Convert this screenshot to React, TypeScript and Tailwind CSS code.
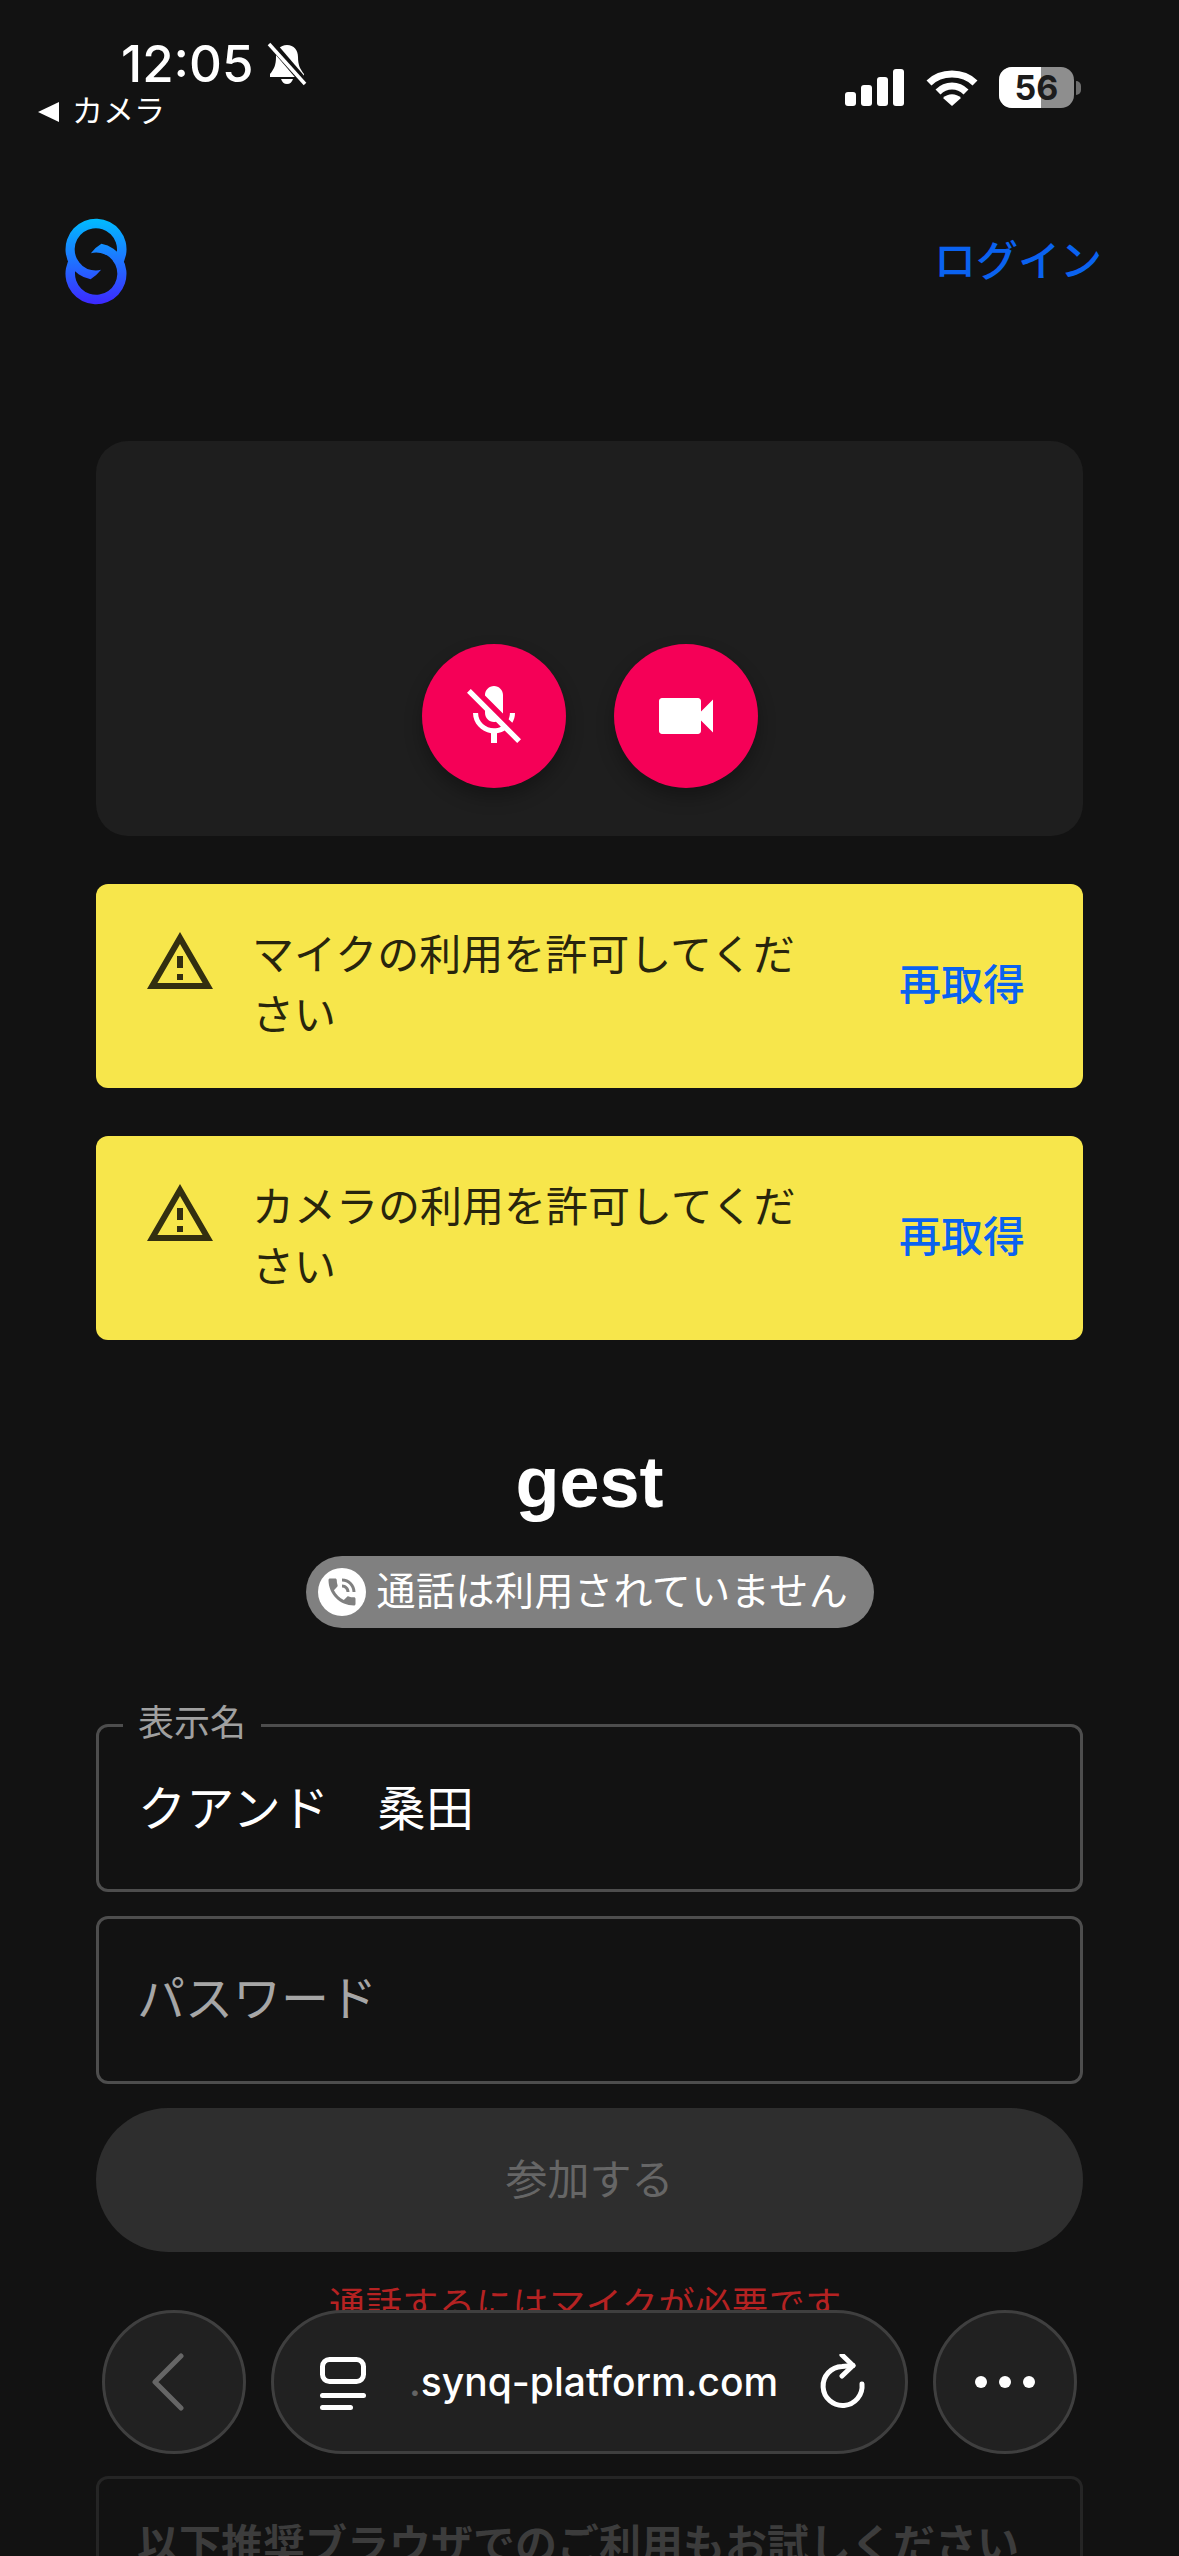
import React from "react";

const JP = "font-['Liberation_Sans','Noto_Sans_CJK_JP',sans-serif]";

function Logo() {
  return (
    <svg width="62" height="87" viewBox="0 0 63 87" fill="none">
      <defs>
        <linearGradient id="lg" gradientUnits="userSpaceOnUse" x1="0" y1="0" x2="0" y2="87">
          <stop offset="0" stopColor="#00bcff" />
          <stop offset="1" stopColor="#3d28ff" />
        </linearGradient>
      </defs>
      <path d="M36.7 52Q32 58 26 61.5A31 31 0 1 1 56.9 48.8L49.1 43.3A21.5 21.5 0 1 0 36.7 52Z" fill="url(#lg)" />
      <path d="M26.3 35Q31 29 37 25.5A31 31 0 1 1 6.1 38.2L13.9 43.7A21.5 21.5 0 1 0 26.3 35Z" fill="url(#lg)" />
    </svg>
  );
}

function Warn() {
  return (
    <svg width="72" height="72" viewBox="0 0 24 24" fill="#332f10" className="shrink-0">
      <path d="M12 5.99 19.53 19H4.47zM12 2 1 21h22zm1 14h-2v2h2zm0-6h-2v4h2z" />
    </svg>
  );
}

function Alert({ text }: { text: string }) {
  return (
    <div className="flex items-start h-[204px] rounded-[12px] bg-[#f7e64b] pl-[48px] pr-[58px] pt-[42px]">
      <Warn />
      <div className="flex-1 ml-[36px] mr-[70px] text-[42px] leading-[60px] text-[#28250d]">{text}</div>
      <div className="text-[42px] leading-[60px] text-[#0a62f0] mt-[30px] font-medium">再取得</div>
    </div>
  );
}

export default function App() {
  return (
    <div className={`relative w-[1179px] h-[2556px] overflow-hidden bg-[#121212] ${JP}`}>
      {/* status bar */}
      <div className="flex justify-between h-[190px] pl-[38px] pr-[98px] pt-[38px] text-white">
        <div>
          <div className="flex items-center pl-[83px] h-[52px]">
            <span className="text-[51px] leading-[52px] font-medium font-['Inter',sans-serif]">12:05</span>
            <svg width="42" height="44" viewBox="0 0 42 44" className="ml-[12px]">
              <path d="M21 3c7 0 11 5 11 12 0 8 2 12 6 17v3H4v-3c4-5 6-9 6-17 0-7 4-12 11-12z" fill="#fff" />
              <path d="M15 37h12c-1 3-3 5-6 5s-5-2-6-5z" fill="#fff" />
              <path d="M4 0 40 42" stroke="#121212" strokeWidth="8" />
              <path d="M3 2 39 42" stroke="#fff" strokeWidth="3.5" />
            </svg>
          </div>
          <div className="flex items-center h-[34px] mt-[5px]">
            <svg width="22" height="20" viewBox="0 0 22 20"><path d="M0 10 21 0v20z" fill="#fff" /></svg>
            <span className="ml-[12px] text-[31px] leading-[34px]">カメラ</span>
          </div>
        </div>
        <div className="flex items-center h-[41px] mt-[29px]">
          <div className="flex items-end gap-[5px] h-[37px]">
            <div className="w-[11px] h-[14px] rounded-[3px] bg-white" />
            <div className="w-[11px] h-[21px] rounded-[3px] bg-white" />
            <div className="w-[11px] h-[29px] rounded-[3px] bg-white" />
            <div className="w-[11px] h-[37px] rounded-[3px] bg-white" />
          </div>
          <svg width="52" height="38" viewBox="0 0 52 38" fill="none" className="ml-[22px]" stroke="#fff" strokeWidth="7">
            <path d="M3 14C15 2 37 2 49 14" />
            <path d="M12 23C20 15 32 15 40 23" />
            <path d="M26 37 17 29C22 24 30 24 35 29z" fill="#fff" stroke="none" />
          </svg>
          <div className="relative ml-[21px] w-[75px] h-[41px] rounded-[13px] overflow-hidden bg-[#8e8e8e] flex items-center justify-center">
            <div className="absolute left-0 top-0 bottom-0 w-[42px] bg-white" />
            <span className="relative text-[34px] font-bold text-[#1c1c1c] font-['Inter',sans-serif] leading-none">56</span>
          </div>
          <div className="ml-[2px] w-[5px] h-[14px] rounded-r-[5px] bg-[#6e6e6e]" />
        </div>
      </div>

      {/* header */}
      <div className="flex items-center justify-between h-[87px] mt-[28px] pl-[65px] pr-[77px]">
        <Logo />
        <span className="text-[42px] text-[#0a62f0] font-medium">ログイン</span>
      </div>

      {/* main */}
      <div className="px-[96px] mt-[136px]">
        <div className="flex items-end justify-center gap-[48px] h-[395px] rounded-[32px] bg-[#1e1e1e] pb-[48px]">
          <div className="flex items-center justify-center w-[144px] h-[144px] rounded-full bg-[#f50057] shadow-[0_9px_18px_rgba(0,0,0,0.3)]">
            <svg width="72" height="72" viewBox="0 0 24 24" fill="#fff">
              <path d="M19 11h-1.7c0 .74-.16 1.43-.43 2.05l1.23 1.23c.56-.98.9-2.09.9-3.28zm-4.02.17c0-.06.02-.11.02-.17V5c0-1.66-1.34-3-3-3S9 3.34 9 5v.18zM4.27 3 3 4.27l6.01 6.01V11c0 1.66 1.33 3 2.99 3 .22 0 .44-.03.65-.08l1.66 1.66c-.71.33-1.5.52-2.31.52-2.76 0-5.3-2.1-5.3-5.1H5c0 3.41 2.72 6.23 6 6.72V21h2v-3.28c.91-.13 1.77-.45 2.54-.9L19.73 21 21 19.73z" />
            </svg>
          </div>
          <div className="flex items-center justify-center w-[144px] h-[144px] rounded-full bg-[#f50057] shadow-[0_9px_18px_rgba(0,0,0,0.3)]">
            <svg width="72" height="72" viewBox="0 0 24 24" fill="#fff">
              <path d="M17 10.5V7c0-.55-.45-1-1-1H4c-.55 0-1 .45-1 1v10c0 .55.45 1 1 1h12c.55 0 1-.45 1-1v-3.5l4 4v-11z" />
            </svg>
          </div>
        </div>

        <div className="mt-[48px] flex flex-col gap-[48px]">
          <Alert text="マイクの利用を許可してください" />
          <Alert text="カメラの利用を許可してください" />
        </div>

        <div className="mt-[100px] text-center text-[72px] leading-[84px] font-bold text-white">gest</div>
        <div className="flex justify-center mt-[32px]">
          <div className="flex items-center h-[72px] w-[568px] rounded-full bg-[#808080] pl-[12px]">
            <div className="flex items-center justify-center w-[48px] h-[48px] rounded-full bg-white shrink-0">
              <svg width="36" height="36" viewBox="0 0 24 24" fill="#808080">
                <path d="M20 15.5c-1.25 0-2.45-.2-3.57-.57-.35-.11-.74-.03-1.02.24l-2.2 2.2c-2.83-1.44-5.15-3.75-6.59-6.59l2.2-2.21c.28-.26.36-.65.25-1C8.7 6.45 8.5 5.25 8.5 4c0-.55-.45-1-1-1H4c-.55 0-1 .45-1 1 0 9.39 7.61 17 17 17 .55 0 1-.45 1-1v-3.5c0-.55-.45-1-1-1zM19 12h2c0-4.97-4.03-9-9-9v2c3.87 0 7 3.13 7 7zm-4 0h2c0-2.76-2.24-5-5-5v2c1.66 0 3 1.34 3 3z" />
              </svg>
            </div>
            <span className="ml-[11px] text-[39px] tracking-[0.5px] text-white whitespace-nowrap">通話は利用されていません</span>
          </div>
        </div>

        <div className="relative mt-[96px] flex items-center h-[168px] rounded-[12px] border-[3px] border-[#4d4d4d] pl-[39px] pt-[3px] text-[48px] tracking-[0.3px] text-white">
          <span className="absolute left-[24px] top-[-24px] bg-[#121212] px-[15px] text-[36px] leading-[42px] tracking-normal text-[#a0a0a0]">表示名</span>
          クアンド　桑田
        </div>
        <div className="mt-[24px] flex items-center h-[168px] rounded-[12px] border-[3px] border-[#4d4d4d] pl-[38px] text-[48px] text-[#a6a6a6]">
          パスワード
        </div>
        <div className="mt-[24px] flex items-center justify-center h-[144px] rounded-full bg-[#2e2e2e] text-[42px] text-[#666666]">参加する</div>
        <div className="mt-[32px] pr-[8px] text-center text-[36px] leading-[44px] tracking-[0.7px] text-[#b52222]">通話するにはマイクが必要です</div>
        <div className="mt-[148px] rounded-[12px] border-[3px] border-[#252525] h-[300px] pt-[40px] pl-[38px] text-left text-[42px] leading-[54px] font-bold text-[#3c3c3c] whitespace-nowrap">
          以下推奨ブラウザでのご利用もお試しください
        </div>
      </div>

      {/* browser toolbar */}
      <div className="absolute left-[102px] top-[2310px] flex items-center gap-[25px]">
        <div className="flex items-center justify-center w-[144px] h-[144px] rounded-full bg-[#212121] border-[3px] border-[#3f3f3f]">
          <svg width="34" height="58" viewBox="0 0 34 58" fill="none" stroke="#666" strokeWidth="5" strokeLinecap="round" strokeLinejoin="round" className="mr-[12px]">
            <path d="M30 3 4 29l26 26" />
          </svg>
        </div>
        <div className="flex items-center w-[637px] h-[144px] rounded-[72px] bg-[#212121] border-[3px] border-[#3f3f3f] pl-[45px]">
          <svg width="48" height="56" viewBox="0 0 48 56" fill="none" className="shrink-0">
            <rect x="3.5" y="5.5" width="41" height="22" rx="7" stroke="#fff" strokeWidth="5" />
            <rect x="1" y="39" width="46" height="5" rx="2.5" fill="#fff" />
            <rect x="1" y="51" width="33" height="5" rx="2.5" fill="#fff" />
          </svg>
          <span className="ml-[42px] text-[39px] font-medium text-white font-['Inter',sans-serif] whitespace-nowrap">
            <span className="opacity-30">.</span>synq-platform.com
          </span>
          <svg width="48" height="56" viewBox="0 0 48 56" fill="none" stroke="#fff" strokeWidth="5" strokeLinecap="round" strokeLinejoin="round" className="ml-[41px] shrink-0">
            <path d="M43 30A19.5 19.5 0 1 1 23 12.5L34 11.5" />
            <path d="M23 1 34 11.5 23 22" />
          </svg>
        </div>
        <div className="flex items-center justify-center gap-[12px] w-[144px] h-[144px] rounded-full bg-[#212121] border-[3px] border-[#3f3f3f]">
          <div className="w-[12px] h-[12px] rounded-full bg-white" />
          <div className="w-[12px] h-[12px] rounded-full bg-white" />
          <div className="w-[12px] h-[12px] rounded-full bg-white" />
        </div>
      </div>
    </div>
  );
}
